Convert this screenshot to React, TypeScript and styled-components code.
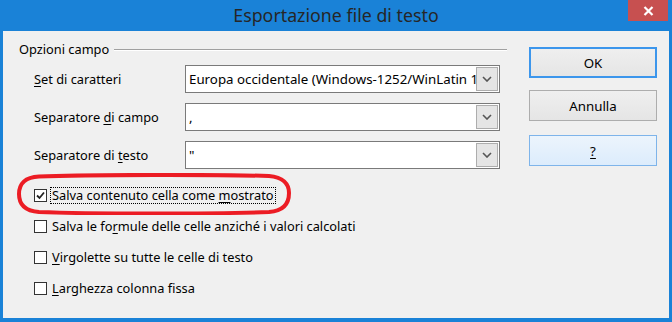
import React from 'react';
import styled, { createGlobalStyle } from 'styled-components';

const GlobalStyle = createGlobalStyle`
  html, body {
    margin: 0;
    padding: 0;
    background: #1a82d7;
  }
  body {
    font-family: "Noto Sans", "Open Sans", sans-serif;
    font-size: 12.8px;
    color: #000;
  }
`;

const Window = styled.div`
  width: 672px;
  height: 322px;
  background: #1a82d7;
  display: flex;
  flex-direction: column;
  box-sizing: border-box;
  padding: 0 3px 4px 3px;
`;

const TitleBar = styled.div`
  height: 31px;
  display: flex;
  align-items: flex-start;
  justify-content: center;
  position: relative;
`;

const Title = styled.span`
  font-size: 17.8px;
  line-height: 30px;
  color: #262626;
`;

const CloseButton = styled.div`
  position: absolute;
  top: 0;
  right: 1px;
  width: 40px;
  height: 21px;
  background: #c75050;
  display: flex;
  align-items: center;
  justify-content: center;
`;

const Client = styled.div`
  flex: 1;
  background: #f0f0f0;
  display: flex;
  padding: 10px 11px 0 16px;
  box-sizing: border-box;
`;

const LeftColumn = styled.div`
  width: 488px;
  display: flex;
  flex-direction: column;
`;

const GroupHeader = styled.div`
  height: 16px;
  display: flex;
  align-items: center;
  gap: 5px;
  line-height: 16px;
`;

const GroupLine = styled.div`
  flex: 1;
  height: 1px;
  background: #a0a0a0;
  box-shadow: 0 1px 0 #ffffff;
`;

const Form = styled.div`
  display: grid;
  grid-template-columns: 151px 315px;
  row-gap: 10px;
  padding-left: 15px;
  margin-top: 8px;
`;

const FieldLabel = styled.label`
  display: flex;
  align-items: center;
  height: 28px;
  white-space: nowrap;
`;

const Combo = styled.div`
  height: 28px;
  box-sizing: border-box;
  border: 1px solid #7a7a7a;
  background: #fff;
  display: flex;
  align-items: center;
  padding: 1px;
`;

const ComboText = styled.span`
  flex: 1;
  overflow: hidden;
  white-space: nowrap;
  padding-left: 2px;
  font-size: 13.3px;
`;

const ComboArrow = styled.div`
  width: 22px;
  height: 24px;
  box-sizing: border-box;
  border: 1px solid #adadad;
  background: #e5e5e5;
  display: flex;
  align-items: center;
  justify-content: center;
`;

const Checks = styled.div`
  display: flex;
  flex-direction: column;
  margin-top: 11px;
  padding-left: 15px;
`;

const CheckRow = styled.div`
  height: 31px;
  display: flex;
  align-items: center;
  gap: 3px;
  position: relative;
`;

const Box = styled.div`
  width: 13px;
  height: 13px;
  box-sizing: border-box;
  border: 1px solid #333;
  background: #fff;
  display: flex;
  align-items: center;
  justify-content: center;
`;

const CheckLabel = styled.span<{ $focused?: boolean }>`
  white-space: nowrap;
  line-height: 15px;
  padding: 0 1px;
  border: 1px dotted ${({ $focused }) => ($focused ? '#000' : 'transparent')};
`;

const Highlight = styled.svg`
  position: absolute;
  left: -17px;
  top: -7px;
  pointer-events: none;
`;

const RightColumn = styled.div`
  margin-left: 22px;
  margin-top: 6px;
  width: 128px;
  display: flex;
  flex-direction: column;
`;

const Button = styled.div<{ $variant?: 'default' | 'hover' }>`
  height: 31px;
  box-sizing: border-box;
  display: flex;
  align-items: center;
  justify-content: center;
  font-size: 13.3px;
  margin-bottom: ${({ $variant }) => ($variant === 'default' ? '12px' : '14px')};
  border: 1px solid
    ${({ $variant }) =>
      $variant === 'default' ? '#3c96ec' : $variant === 'hover' ? '#7eb4ea' : '#adadad'};
  background: ${({ $variant }) =>
    $variant === 'hover' ? 'linear-gradient(#ecf4fc, #dcecfc)' : 'linear-gradient(#efefef, #e5e5e5)'};
  ${({ $variant }) => $variant === 'default' && 'box-shadow: inset 0 0 0 1px #3c96ec;'}
`;

const U = styled.span`
  text-decoration: underline;
  text-underline-offset: 2px;
`;

const Arrow = () => (
  <svg width="10" height="6" viewBox="0 0 10 6">
    <path d="M1 1 L5 5 L9 1" fill="none" stroke="#555" strokeWidth="1.6" />
  </svg>
);

const fields: { label: React.ReactNode; value: string }[] = [
  { label: <><U>S</U>et di caratteri</>, value: 'Europa occidentale (Windows-1252/WinLatin 1)' },
  { label: <>Separatore <U>d</U>i campo</>, value: ',' },
  { label: <>Separatore di <U>t</U>esto</>, value: '"' },
];

const options: { label: React.ReactNode; checked?: boolean }[] = [
  { label: <>Salva contenuto cella come <U>m</U>ostrato</>, checked: true },
  { label: <>Salva le fo<U>r</U>mule delle celle anziché i valori calcolati</> },
  { label: <><U>V</U>irgolette su tutte le celle di testo</> },
  { label: <><U>L</U>arghezza colonna fissa</> },
];

export default function App() {
  return (
    <>
      <GlobalStyle />
      <Window>
        <TitleBar>
          <Title>Esportazione file di testo</Title>
          <CloseButton>
            <svg width="11" height="10" viewBox="0 0 11 10">
              <path d="M1.5 1 L9.5 9 M9.5 1 L1.5 9" stroke="#fff" strokeWidth="2.2" />
            </svg>
          </CloseButton>
        </TitleBar>
        <Client>
          <LeftColumn>
            <GroupHeader>
              <span>Opzioni campo</span>
              <GroupLine />
            </GroupHeader>
            <Form>
              {fields.map((f, i) => (
                <React.Fragment key={i}>
                  <FieldLabel>
                    <span>{f.label}</span>
                  </FieldLabel>
                  <Combo>
                    <ComboText>{f.value}</ComboText>
                    <ComboArrow>
                      <Arrow />
                    </ComboArrow>
                  </Combo>
                </React.Fragment>
              ))}
            </Form>
            <Checks>
              {options.map((o, i) => (
                <CheckRow key={i}>
                  <Box>
                    {o.checked && (
                      <svg width="9" height="9" viewBox="0 0 9 9">
                        <path d="M1 4.5 L3.5 7 L8 1.5" fill="none" stroke="#222" strokeWidth="1.8" />
                      </svg>
                    )}
                  </Box>
                  <CheckLabel $focused={i === 0}>{o.label}</CheckLabel>
                  {i === 0 && (
                    <Highlight width="274" height="42" viewBox="0 0 274 42">
                      <path
                        d="M22 3.5 C70 1.5 205 1.5 252 3 C266 4 272 11 272 20 C272 31 266 38 252 39 C200 41 70 41 22 39 C8 38 2 31 2 21 C2 11 8 4 22 3.5 Z"
                        fill="none"
                        stroke="#ec1c24"
                        strokeWidth="4"
                      />
                    </Highlight>
                  )}
                </CheckRow>
              ))}
            </Checks>
          </LeftColumn>
          <RightColumn>
            <Button $variant="default">OK</Button>
            <Button>Annulla</Button>
            <Button $variant="hover">
              <U>?</U>
            </Button>
          </RightColumn>
        </Client>
      </Window>
    </>
  );
}
